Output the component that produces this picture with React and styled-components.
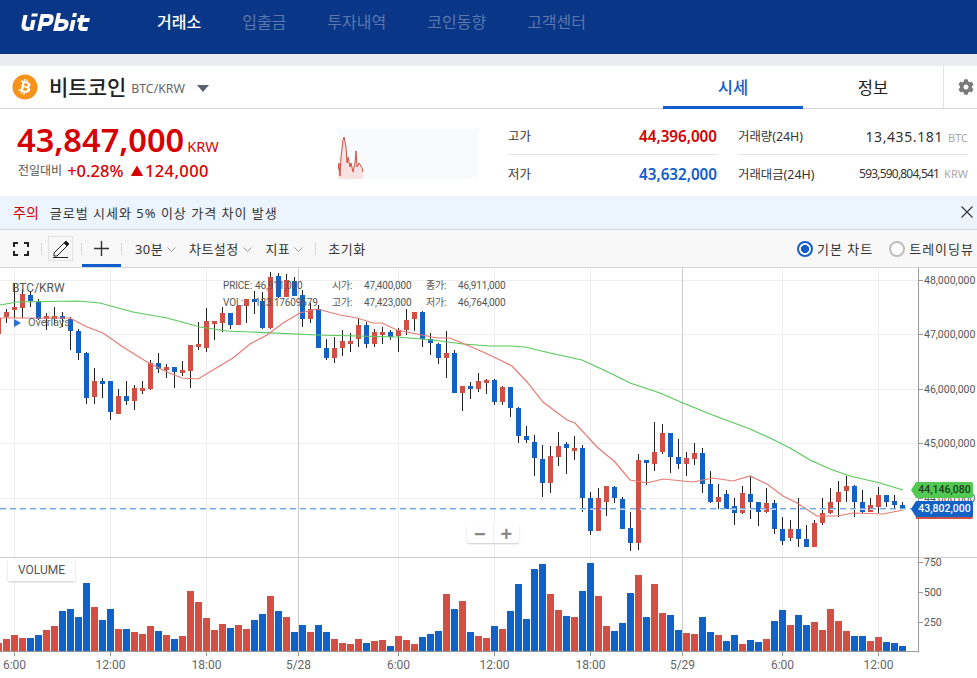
import React from 'react'
import styled, { createGlobalStyle } from 'styled-components'
import { FaBitcoin, FaCog } from 'react-icons/fa'

const RED = '#d24f45'
const BLUE = '#1261c4'
const SANS = '"Noto Sans", "Noto Sans CJK KR", sans-serif'
const CHART_FONT = 'Roboto, "Noto Sans CJK KR", sans-serif'

const GlobalStyle = createGlobalStyle`
  html, body {
    margin: 0;
    padding: 0;
    background: #fff;
    overflow: hidden;
  }
  body {
    font-family: ${SANS};
    color: #222;
  }
`

const Page = styled.div`
  width: 977px;
  height: 678px;
  overflow: hidden;
  display: flex;
  flex-direction: column;
`

const Header = styled.header`
  height: 54px;
  background: #093687;
  display: flex;
  align-items: center;
  padding-left: 16px;
  flex: none;
`

const Logo = styled.svg`
  width: 78px;
  height: 19px;
  margin: -9px 63px 0 0;
`

const Nav = styled.nav`
  display: flex;
  gap: 41px;
  margin-top: -13px;
`

const NavItem = styled.span`
  font-size: 16px;
  font-weight: ${(p) => (p.$active ? 500 : 400)};
  color: ${(p) => (p.$active ? '#fff' : '#5b77ac')};
`

const Gutter = styled.div`
  height: 12px;
  background: #e9ecf1;
  flex: none;
`

const TitleBar = styled.div`
  height: 43px;
  box-sizing: border-box;
  border-bottom: 1px solid #d5d6dc;
  display: flex;
  align-items: stretch;
  padding-left: 12px;
  flex: none;
`

const CoinName = styled.div`
  display: flex;
  align-items: center;
  flex: 1;
  svg.coin {
    color: #f7931a;
    background: radial-gradient(circle, #fff 50%, transparent 52%);
    border-radius: 50%;
  }
  strong {
    font-size: 21px;
    font-weight: 500;
    margin: -3px 0 0 11px;
    color: #222;
  }
  small {
    font-size: 12.3px;
    color: #666;
    margin: 3px 0 0 5px;
  }
`

const Caret = styled.i`
  width: 0;
  height: 0;
  border-left: 6.5px solid transparent;
  border-right: 6.5px solid transparent;
  border-top: 7px solid #5c6170;
  margin: 3px 0 0 12px;
`

const Tab = styled.div`
  width: 140px;
  height: 43px;
  box-sizing: border-box;
  display: flex;
  align-items: center;
  justify-content: center;
  font-size: 16.5px;
  font-weight: ${(p) => (p.$active ? 500 : 400)};
  color: ${(p) => (p.$active ? '#115dcb' : '#222')};
  border-bottom: 3px solid ${(p) => (p.$active ? '#115dcb' : 'transparent')};
  padding-top: 1px;
`

const GearCell = styled.div`
  width: 34px;
  height: 42px;
  box-sizing: border-box;
  border-left: 1px solid #e1e3e8;
  display: flex;
  align-items: center;
  justify-content: flex-end;
  padding-right: 3px;
  color: #7a7a7a;
`

const PriceRow = styled.section`
  height: 87px;
  display: flex;
  padding-left: 17px;
  flex: none;
`

const PriceMain = styled.div`
  width: 321px;
  color: #d60000;
`

const BigPrice = styled.div`
  display: flex;
  align-items: baseline;
  height: 36px;
  margin-top: 13px;
  line-height: 36px;
  b {
    font-size: 32.6px;
    font-weight: 600;
  }
  span {
    font-size: 14.5px;
    margin-left: 3px;
  }
`

const Change = styled.div`
  display: flex;
  align-items: center;
  height: 22px;
  margin-top: 1px;
  font-size: 16.5px;
  font-weight: 500;
  span {
    font-size: 12px;
    font-weight: 400;
    color: #555;
    margin: 0 5px 0 1px;
  }
  b {
    font-weight: 500;
    margin-left: 7px;
    display: flex;
    align-items: center;
    letter-spacing: 0.4px;
  }
  b i {
    font-style: normal;
    font-size: 13px;
    margin-right: 1px;
  }
`

const Spark = styled.svg`
  width: 140px;
  height: 50px;
  margin-top: 20px;
  background: #f9fafc;
  flex: none;
`

const StatColumn = styled.div`
  width: ${(p) => p.$width}px;
  margin: 9px 0 0 ${(p) => p.$gap}px;
  flex: none;
`

const StatRow = styled.div`
  height: 37px;
  box-sizing: border-box;
  display: flex;
  align-items: center;
  justify-content: space-between;
  font-size: 12.4px;
  color: #333;
  &:first-child {
    border-bottom: 1px solid #e6e7ed;
  }
`

const StatValue = styled.span`
  font-size: ${(p) => p.$size || 15.2}px;
  font-weight: ${(p) => p.$weight || 400};
  color: ${(p) => p.$color || '#333'};
  letter-spacing: ${(p) => p.$spacing || 0}px;
  margin-right: ${(p) => (p.$weight ? 1 : 0)}px;
  small {
    font-size: 11px;
    color: #aaa;
    letter-spacing: 0;
    margin-left: 5px;
  }
`

const Notice = styled.div`
  height: 34px;
  box-sizing: border-box;
  background: #ecf4fe;
  border-bottom: 1px solid #d5d6dc;
  display: flex;
  align-items: center;
  padding: 0 4px 1px 13px;
  font-size: 13px;
  letter-spacing: 1px;
  color: #333;
  flex: none;
  em {
    font-style: normal;
    font-size: 14px;
    color: #d60000;
    margin-right: 11px;
    letter-spacing: 0;
  }
  span {
    flex: 1;
  }
`

const Toolbar = styled.div`
  height: 38px;
  box-sizing: border-box;
  background: #f8f8f8;
  border-bottom: 1px solid #d5d6dc;
  display: flex;
  align-items: center;
  padding-left: 13px;
  font-size: 13px;
  color: #333;
  flex: none;
`

const ToolSep = styled.i`
  width: 1px;
  height: 12px;
  background: #d8d8d8;
  flex: none;
  margin-left: ${(p) => p.$gap || 0}px;
`

const PenButton = styled.div`
  width: 25px;
  height: 25px;
  border: 1px solid #e2e2e2;
  display: flex;
  align-items: center;
  justify-content: center;
  margin: 0 8px 0 6px;
  box-sizing: border-box;
`

const CrossTab = styled.div`
  width: 39px;
  height: 37px;
  box-sizing: border-box;
  border-bottom: 3px solid #115dcb;
  display: flex;
  align-items: center;
  justify-content: center;
  padding-top: 3px;
`

const DropItem = styled.div`
  display: flex;
  align-items: center;
  gap: 4px;
  font-size: 13px;
  margin-left: ${(p) => p.$gap}px;
  letter-spacing: 0.4px;
  svg {
    margin-top: 3px;
  }
`

const ResetItem = styled.span`
  margin-left: 12px;
  font-size: 13px;
  letter-spacing: 0.5px;
`

const RadioGroup = styled.div`
  margin-left: auto;
  display: flex;
  align-items: center;
  padding-right: 3px;
`

const Radio = styled.i`
  width: 16px;
  height: 16px;
  box-sizing: border-box;
  border-radius: 50%;
  border: 2px solid ${(p) => (p.$on ? '#115dcb' : '#bdbdbd')};
  background: ${(p) => (p.$on ? 'radial-gradient(circle, #115dcb 45%, #fff 50%)' : '#fff')};
  margin: 0 4px 0 ${(p) => p.$gap || 0}px;
`

const RadioLabel = styled.span`
  font-size: 13px;
  letter-spacing: 1px;
`

const ChartWrap = styled.div`
  position: relative;
  height: 410px;
  font-family: ${CHART_FONT};
  flex: none;
  svg {
    display: block;
  }
`

const PairLabel = styled.div`
  position: absolute;
  left: 12px;
  top: 13px;
  font-size: 12px;
  color: #555;
`

const OverlayToggle = styled.div`
  position: absolute;
  left: 14px;
  top: 48px;
  display: flex;
  align-items: center;
  gap: 7px;
  font-size: 11px;
  color: #666;
  &::before {
    content: '';
    border-left: 7px solid #2b6fd0;
    border-top: 4px solid transparent;
    border-bottom: 4px solid transparent;
  }
`

const InfoGrid = styled.div`
  position: absolute;
  left: 223px;
  top: 11px;
  display: grid;
  grid-template-columns: 32px 77px 32px 62px 32px 70px;
  row-gap: 4px;
  font-size: 10px;
  line-height: 13px;
  letter-spacing: -0.15px;
  color: #555;
  white-space: nowrap;
`

const ZoomControls = styled.div`
  position: absolute;
  left: 467px;
  top: 256px;
  width: 52px;
  height: 19px;
  display: flex;
  background: #fff;
  border-radius: 2px;
  box-shadow: 0 1px 2px rgba(0, 0, 0, 0.2);
  span {
    flex: 1;
    display: flex;
    align-items: center;
    justify-content: center;
    font-family: "Liberation Sans", sans-serif;
    font-size: 20px;
    font-weight: 700;
    color: #888;
    line-height: 1;
  }
  span + span {
    border-left: 1px solid #eee;
  }
`

const VolumeTag = styled.div`
  position: absolute;
  left: 8px;
  top: 291px;
  width: 67px;
  height: 22px;
  display: flex;
  align-items: center;
  justify-content: center;
  background: #fff;
  font-size: 12px;
  color: #555;
  box-shadow: 0 1px 2px rgba(0, 0, 0, 0.2);
`

const PriceTag = styled.div`
  position: absolute;
  left: 916px;
  top: ${(p) => p.$top}px;
  width: 57px;
  height: 16px;
  background: ${(p) => p.$bg};
  color: ${(p) => p.$color};
  font-size: 10.5px;
  font-weight: 500;
  line-height: 16px;
  text-align: center;
  border-radius: 0 2px 2px 0;
  box-shadow: ${(p) => p.$shadow || 'none'};
  &::before {
    content: '';
    position: absolute;
    left: -5px;
    top: 0;
    border-right: 5px solid ${(p) => p.$bg};
    border-top: 8px solid transparent;
    border-bottom: 8px solid transparent;
  }
`

// [colour, body top, body bottom, wick top, wick bottom], one every 8px from k = 0
const candles = [
  ['r',312,317,309,323],['r',307,310,283,318],['r',294,308,289,318],['b',295,301,292,307],
  ['b',302,319,299,320],['r',316,319,313,330],['r',316,319,307,325],['b',316,319,312,327],
  ['b',319,331,317,350],['b',331,353,329,360],['b',353,398,352,404],['r',381,397,368,404],
  ['b',381,384,378,398],['b',381,412,381,420],['r',396,414,389,414],['b',396,401,381,405],
  ['r',388,401,385,410],['r',388,391,381,394],['r',363,389,360,390],['b',363,369,353,373],
  ['r',367,370,364,378],['b',367,372,367,388],['r',370,373,361,376],['r',345,371,345,388],
  ['r',344,347,322,350],['r',321,348,308,352],['r',321,324,321,340],['r',313,323,307,332],
  ['b',313,325,313,329],['r',306,325,306,325],['r',299,306,299,323],['b',299,302,291,314],
  ['b',301,328,292,329],['r',277,328,272,329],['b',276,297,273,298],['r',280,297,274,297],
  ['b',281,296,277,296],['b',295,319,290,327],['r',309,319,303,323],['b',309,348,305,348],
  ['b',348,358,339,360],['r',348,358,337,363],['r',341,348,330,356],['r',341,344,333,352],
  ['r',325,339,319,347],['b',325,344,322,348],['r',332,344,329,347],['r',332,335,327,344],
  ['b',332,337,330,340],['r',330,336,328,352],['r',320,330,309,335],['r',312,319,312,331],
  ['b',312,339,311,347],['b',339,343,333,355],['b',344,358,343,364],['r',353,358,331,378],
  ['b',353,393,350,393],['r',386,393,386,411],['b',386,389,382,399],['r',381,389,373,392],
  ['r',380,383,379,394],['b',380,402,379,405],['r',387,402,386,405],['b',387,408,387,417],
  ['b',408,436,407,443],['b',436,440,426,443],['b',442,458,435,476],['b',459,483,445,497],
  ['r',456,483,446,493],['r',446,457,432,466],['b',444,448,442,474],['r',448,451,436,460],
  ['b',448,498,445,512],['b',498,531,492,535],['r',498,531,488,531],['r',486,502,486,516],
  ['b',487,498,486,503],['b',499,529,497,529],['b',528,543,512,551],['r',460,543,454,550],
  ['b',460,463,460,485],['r',452,464,422,471],['r',433,452,424,454],['b',433,457,433,473],
  ['b',457,464,439,469],['r',458,464,452,476],['r',453,459,443,465],['b',453,484,448,493],
  ['b',484,502,471,503],['r',497,502,484,509],['b',494,509,490,509],['b',506,513,498,525],
  ['r',493,513,486,514],['b',494,502,476,519],['b',502,512,502,526],['r',503,512,488,513],
  ['b',503,529,500,534],['b',529,541,517,545],['r',529,538,520,541],['b',529,539,498,547],
  ['b',539,547,525,547],['r',523,547,520,547],['r',513,523,498,525],['r',502,513,488,514],
  ['r',492,502,481,517],['r',486,491,476,502],['b',486,502,485,517],['b',502,512,490,513],
  ['r',505,512,498,512],['r',495,507,487,513],['b',495,502,495,507],['b',501,505,495,510],
  ['b',505,509,502,509],
]

// [colour, top of bar] read from the volume pane, baseline at y 651
const volumes = [
  ['r',639],['r',635],['r',638],['b',638],['b',635],['r',630],['r',626],['b',611],['b',609],['b',617],
  ['b',583],['r',607],['b',620],['b',609],['r',629],['b',629],['r',632],['r',634],['r',626],['b',631],
  ['r',635],['b',639],['r',636],['r',591],['r',602],['r',618],['r',630],['r',624],['b',628],['r',625],
  ['r',629],['b',620],['b',614],['r',596],['b',611],['r',617],['b',632],['b',625],['r',632],['b',625],
  ['b',632],['r',639],['r',643],['r',644],['r',639],['b',643],['r',641],['r',640],['b',646],['r',636],
  ['r',640],['r',644],['b',637],['b',634],['b',631],['r',594],['b',609],['r',601],['b',632],['r',636],
  ['r',638],['b',626],['r',629],['b',611],['b',584],['b',619],['b',569],['b',564],['r',594],['r',610],
  ['b',616],['r',617],['b',591],['b',563],['r',596],['r',626],['b',631],['b',623],['b',593],['r',575],
  ['b',617],['r',584],['r',613],['b',615],['b',630],['r',633],['r',634],['b',617],['b',632],['r',635],
  ['b',641],['b',635],['r',644],['b',640],['b',642],['r',639],['b',621],['b',610],['r',625],['b',615],
  ['b',625],['r',622],['r',630],['r',609],['r',621],['r',631],['b',636],['b',636],['r',641],['r',637],
  ['b',642],['b',643],['b',646],
]

const greenLine = '0,305 17,302 77,301 100,303 133,312 167,318 200,327 227,331 250,332 317,335 397,337 433,340 463,344 490,346 510,346 525,347 550,353 582,360 610,373 630,383 660,393 683,403 710,414 750,429 770,438 790,448 810,460 830,469 850,476 880,483 903,490'
const redLine = '0,318 70,318 87,327 103,333 123,347 147,362 167,372 182,378 198,379 213,370 233,358 250,344 267,335 283,323 300,313 317,309 340,315 357,318 373,323 382,323 397,330 417,334 437,338 450,338 467,345 483,352 500,360 512,366 527,382 543,402 567,420 575,423 597,447 615,462 630,480 647,483 663,479 693,482 713,478 733,481 750,476 767,484 783,496 797,503 817,516 837,516 853,513 883,514 903,510'

const verticals = [
  [14, 0], [110, 0], [206, 0], [298, 1], [398, 0], [494, 0], [590, 0], [682, 1], [782, 0], [878, 0],
]
const timeLabels = ['6:00', '12:00', '18:00', '5/28', '6:00', '12:00', '18:00', '5/29', '6:00', '12:00']
const priceLevels = [
  [280, '48,000,000'], [334, '47,000,000'], [389, '46,000,000'], [443, '45,000,000'], [498, '44,000,000'],
]
const volumeLevels = [[562, '750'], [592, '500'], [622, '250']]

const colourOf = (c) => (c === 'r' ? RED : BLUE)

const Logotype = () => (
  <Logo viewBox="0 0 70 19">
    <g transform="translate(3 0) skewX(-12)" fill="none" stroke="#fff" strokeWidth="4">
      <path d="M3 2 V11 Q3 16 8 16 H10" />
      <path d="M12 7 V17" />
      <path d="M9 2 L15 2" strokeWidth="3" />
      <path d="M20 18 V3 H26 Q30 3 30 7 Q30 11 26 11 H21" />
      <path d="M36 0 V16 H41 Q46 16 46 12 Q46 8 41 8 H36" />
      <path d="M52 7 V18 M52 0 V4" />
      <path d="M60 2 V13 Q60 16 64 16 H68 M56 7 H68" />
    </g>
  </Logo>
)

const Chevron = () => (
  <svg width="9" height="6" viewBox="0 0 9 6" fill="none" stroke="#999">
    <path d="M0.5 0.5 L4.5 4.5 L8.5 0.5" />
  </svg>
)

const Sparkline = () => (
  <Spark viewBox="0 0 140 50">
    <path d="M0 41 L1 34 L2 47 L3 28 L5 11 L6 8 L8 18 L9 34 L10 28 L12 38 L13 34 L15 43 L17 34 L18 22 L19 38 L21 34 L24 39 L25 43 V50 H0 Z" fill="#f6e3e1" />
    <polyline points="0,41 1,34 2,47 3,28 5,11 6,8 8,18 9,34 10,28 12,38 13,34 15,43 17,34 18,22 19,38 21,34 24,39 25,43" fill="none" stroke="#d24f45" />
  </Spark>
)

const ChartCanvas = () => (
  <svg width="977" height="410" viewBox="0 268 977 410">
    {priceLevels.map(([y]) => (
      <rect key={y} x="0" y={y} width="918" height="1" fill="#eee" />
    ))}
    {verticals.map(([x, major]) => (
      <rect key={x} x={x} y="268" width="1" height="383" fill={major ? '#ccc' : '#eee'} />
    ))}
    <rect x="0" y="557" width="977" height="1" fill="#ccc" />

    <rect x="-4" y="318" width="5" height="16" fill={RED} />
    {candles.map(([c, top, bottom, wickTop, wickBottom], k) => (
      <g key={k}>
        <rect x={6 + 8 * k} y={wickTop} width="1" height={wickBottom - wickTop} fill="#222" />
        <rect x={4 + 8 * k} y={top} width="5" height={bottom - top} fill={colourOf(c)} />
      </g>
    ))}
    <polyline points={greenLine} fill="none" stroke="#58c858" strokeWidth="1.2" />
    <polyline points={redLine} fill="none" stroke="#e57b75" strokeWidth="1.2" />
    <line x1="0" y1="508.5" x2="918" y2="508.5" stroke="#6fa5e8" strokeDasharray="6 4" />
    <line x1="0" y1="509.5" x2="918" y2="509.5" stroke="#c5daf3" strokeDasharray="6 4" />

    <rect x="-5" y="643" width="7" height="8" fill={RED} />
    {volumes.map(([c, top], k) => (
      <rect key={k} x={3 + 8 * k} y={top} width="7" height={651 - top} fill={colourOf(c)} />
    ))}

    <rect x="918" y="268" width="1" height="384" fill="#999" />
    <rect x="0" y="651" width="919" height="1" fill="#999" />
    <g fontFamily={CHART_FONT} fontSize="10.5" fill="#555">
      {priceLevels.concat(volumeLevels).map(([y, text]) => (
        <g key={text}>
          <rect x="919" y={y} width="4" height="1" fill="#999" />
          <text x="924" y={y + 4}>{text}</text>
        </g>
      ))}
    </g>
    <g fontFamily={CHART_FONT} fontSize="12" fill="#666" textAnchor="middle">
      {verticals.map(([x], i) => (
        <g key={x}>
          <rect x={x} y="652" width="1" height="4" fill="#999" />
          <text x={x + 0.5} y="669">{timeLabels[i]}</text>
        </g>
      ))}
    </g>
  </svg>
)

const App = () => (
  <Page>
    <GlobalStyle />
    <Header>
      <Logotype />
      <Nav>
        <NavItem $active>거래소</NavItem>
        <NavItem>입출금</NavItem>
        <NavItem>투자내역</NavItem>
        <NavItem>코인동향</NavItem>
        <NavItem>고객센터</NavItem>
      </Nav>
    </Header>
    <Gutter />
    <TitleBar>
      <CoinName>
        <FaBitcoin className="coin" size={26} />
        <strong>비트코인</strong>
        <small>BTC/KRW</small>
        <Caret />
      </CoinName>
      <Tab $active>시세</Tab>
      <Tab>정보</Tab>
      <GearCell>
        <FaCog size={16} />
      </GearCell>
    </TitleBar>
    <PriceRow>
      <PriceMain>
        <BigPrice>
          <b>43,847,000</b>
          <span>KRW</span>
        </BigPrice>
        <Change>
          <span>전일대비</span>
          +0.28%
          <b><i>▲</i>124,000</b>
        </Change>
      </PriceMain>
      <Sparkline />
      <StatColumn $width={210} $gap={30}>
        <StatRow>
          고가
          <StatValue $color="#d60000" $weight={600}>44,396,000</StatValue>
        </StatRow>
        <StatRow>
          저가
          <StatValue $color="#115dcb" $weight={600}>43,632,000</StatValue>
        </StatRow>
      </StatColumn>
      <StatColumn $width={230} $gap={20}>
        <StatRow>
          거래량(24H)
          <StatValue $size={14} $spacing={0.6}>13,435.181<small>BTC</small></StatValue>
        </StatRow>
        <StatRow>
          거래대금(24H)
          <StatValue $size={12} $spacing={-0.8}>593,590,804,541<small>KRW</small></StatValue>
        </StatRow>
      </StatColumn>
    </PriceRow>
    <Notice>
      <em>주의</em>
      <span>글로벌 시세와 5% 이상 가격 차이 발생</span>
      <svg width="12" height="12" viewBox="0 0 12 12" stroke="#333" strokeWidth="1.1">
        <path d="M0.5 0.5 L11.5 11.5 M11.5 0.5 L0.5 11.5" />
      </svg>
    </Notice>
    <Toolbar>
      <svg width="16" height="14" viewBox="0 0 16 14" fill="none" stroke="#222" strokeWidth="2">
        <path d="M1 5 V1 H5 M11 1 H15 V5 M15 9 V13 H11 M5 13 H1 V9" />
      </svg>
      <ToolSep $gap={12} />
      <PenButton>
        <svg width="18" height="18" viewBox="0 0 18 18" fill="none" stroke="#222">
          <path d="M2 13 L12 3 L15 6 L5 16 H2 Z" />
          <path d="M12 3 L14 1 L17 4 L15 6 Z" fill="#222" />
          <path d="M1 17.5 H16" />
        </svg>
      </PenButton>
      <ToolSep />
      <CrossTab>
        <svg width="15" height="15" viewBox="0 0 15 15" stroke="#333" strokeWidth="1.4">
          <path d="M7.5 0 V15 M0 7.5 H15" />
        </svg>
      </CrossTab>
      <ToolSep />
      <DropItem $gap={13}>30분<Chevron /></DropItem>
      <DropItem $gap={13}>차트설정<Chevron /></DropItem>
      <DropItem $gap={14}>지표<Chevron /></DropItem>
      <ToolSep $gap={12} />
      <ResetItem>초기화</ResetItem>
      <RadioGroup>
        <Radio $on />
        <RadioLabel>기본 차트</RadioLabel>
        <Radio $gap={16} />
        <RadioLabel>트레이딩뷰</RadioLabel>
      </RadioGroup>
    </Toolbar>
    <ChartWrap>
      <ChartCanvas />
      <PairLabel>BTC/KRW</PairLabel>
      <OverlayToggle>Overlays</OverlayToggle>
      <InfoGrid>
        <span>PRICE:</span><span>46,911,000</span>
        <span>시가:</span><span>47,400,000</span>
        <span>종가:</span><span>46,911,000</span>
        <span>VOL:</span><span>123.17609679</span>
        <span>고가:</span><span>47,423,000</span>
        <span>저가:</span><span>46,764,000</span>
      </InfoGrid>
      <ZoomControls>
        <span>−</span>
        <span>+</span>
      </ZoomControls>
      <VolumeTag>VOLUME</VolumeTag>
      <PriceTag $top={214} $bg="#52c952" $color="#1d3b1d">44,146,080</PriceTag>
      <PriceTag $top={233} $bg="#1261c4" $color="#fff" $shadow="0 2px 0 #d24f45">43,802,000</PriceTag>
    </ChartWrap>
  </Page>
)

export default App
